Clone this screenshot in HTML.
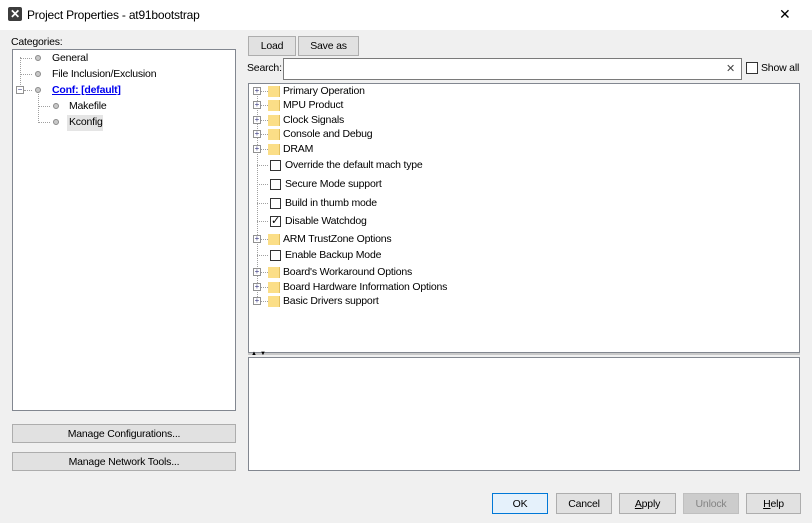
<html><head><style>
body{margin:0;width:812px;height:523px;background:#f0f0f0;font-family:"Liberation Sans",sans-serif;font-size:10px;letter-spacing:-0.2px;color:#000;position:relative;overflow:hidden}
.a{position:absolute}
.btn{position:absolute;background:#e1e1e1;border:1px solid #adadad;box-sizing:border-box;display:flex;align-items:center;justify-content:center;font-size:10.5px}
.panel{position:absolute;background:#fff;border:1px solid #828790;box-sizing:border-box}
.t{position:absolute;white-space:nowrap;font-size:10.5px}
.pl{position:absolute;width:8px;height:8px;border:1px solid #919191;box-sizing:border-box;background:#fff;font-size:8px;line-height:6px;text-align:center;color:#3a3a80;letter-spacing:0}
.fold{position:absolute;width:11px;height:11px;background:#fbde87;border-right:1px solid #e2c060}
.cb{position:absolute;width:11px;height:11px;border:1px solid #333;background:#fff;box-sizing:border-box}
.dot{position:absolute;width:6px;height:6px;border-radius:50%;background:#c8c8c8;border:1px solid #8a8a8a;box-sizing:border-box}
.hl{position:absolute;border-top:1px dotted #a0a0a0;height:0}
.vl{position:absolute;border-left:1px dotted #a0a0a0;width:0}
</style></head><body>
<div class="a" style="left:0;top:0;width:812px;height:30px;background:#fff"></div>
<div class="a" style="left:8px;top:7px;width:14px;height:14px;background:#3c3c3c;border-radius:2px;color:#fff;font-size:12px;line-height:14px;text-align:center;font-weight:bold">✕</div>
<div class="t" style="left:27px;top:8px;font-size:12px">Project Properties - at91bootstrap</div>
<div class="a" style="left:779px;top:6px;font-size:14px">✕</div>

<div class="t" style="left:11px;top:36px">Categories:</div>
<div class="panel" style="left:12px;top:49px;width:224px;height:362px"></div>
<div class="vl" style="left:20px;top:57px;height:30px"></div>
<div class="hl" style="left:20px;top:58px;width:12px"></div>
<div class="hl" style="left:20px;top:74px;width:12px"></div>
<div class="hl" style="left:24px;top:90px;width:8px"></div>
<div class="pl" style="left:16px;top:86px">−</div>
<div class="dot" style="left:35px;top:55px"></div><div class="t" style="left:52px;top:52px">General</div>
<div class="dot" style="left:35px;top:71px"></div><div class="t" style="left:52px;top:68px">File Inclusion/Exclusion</div>
<div class="dot" style="left:35px;top:87px"></div><div class="t" style="left:52px;top:84px;color:#0000ee;font-weight:bold;text-decoration:underline">Conf: [default]</div>
<div class="vl" style="left:38px;top:94px;height:29px"></div>
<div class="hl" style="left:38px;top:106px;width:12px"></div>
<div class="hl" style="left:38px;top:122px;width:12px"></div>
<div class="dot" style="left:53px;top:103px"></div><div class="t" style="left:69px;top:100px">Makefile</div>
<div class="dot" style="left:53px;top:119px"></div>
<div class="a" style="left:67px;top:115px;width:36px;height:16px;background:#e5e5e5"></div>
<div class="t" style="left:69px;top:116px">Kconfig</div>

<div class="btn" style="left:12px;top:424px;width:224px;height:19px">Manage Configurations...</div>
<div class="btn" style="left:12px;top:452px;width:224px;height:19px">Manage Network Tools...</div>

<div class="btn" style="left:248px;top:36px;width:48px;height:20px">Load</div>
<div class="btn" style="left:298px;top:36px;width:61px;height:20px">Save as</div>
<div class="t" style="left:247px;top:62px">Search:</div>
<div class="a" style="left:283px;top:58px;width:459px;height:22px;background:#fff;border:1px solid #7a7a7a;box-sizing:border-box"></div>
<div class="a" style="left:726px;top:62px;font-size:11px;color:#444">✕</div>
<div class="cb" style="left:746px;top:62px;width:12px;height:12px"></div>
<div class="t" style="left:761px;top:62px">Show all</div>

<div class="panel" style="left:248px;top:83px;width:552px;height:270px"></div>
<div class="vl" style="left:257px;top:90px;height:215px"></div>
<div id="rows"></div>
<div class="a" style="left:248px;top:353px;width:552px;height:2px;background:#c8c8c8"></div>
<div class="a" style="left:251px;top:351px;font-size:6px">▲</div><div class="a" style="left:260px;top:351px;font-size:6px">▼</div>
<div class="panel" style="left:248px;top:357px;width:552px;height:114px"></div>

<div class="btn" style="left:492px;top:493px;width:56px;height:21px;border:1px solid #0078d7;background:#e5f1fb">OK</div>
<div class="btn" style="left:556px;top:493px;width:56px;height:21px">Cancel</div>
<div class="btn" style="left:619px;top:493px;width:57px;height:21px"><u>A</u>pply</div>
<div class="btn" style="left:683px;top:493px;width:56px;height:21px;color:#838383;background:#ccc;border-color:#bfbfbf">Unlock</div>
<div class="btn" style="left:746px;top:493px;width:55px;height:21px"><u>H</u>elp</div>

<script>
var rows=[[91,'f','Primary Operation'],[105,'f','MPU Product'],[120,'f','Clock Signals'],[134,'f','Console and Debug'],[149,'f','DRAM'],[165,'c','Override the default mach type'],[184,'c','Secure Mode support'],[203,'c','Build in thumb mode'],[221,'k','Disable Watchdog'],[239,'f','ARM TrustZone Options'],[255,'c','Enable Backup Mode'],[272,'f',"Board's Workaround Options"],[287,'f','Board Hardware Information Options'],[301,'f','Basic Drivers support']];
var h='';rows.forEach(function(r){var y=r[0];
h+='<div class="hl" style="left:257px;top:'+y+'px;width:11px"></div>';
if(r[1]=='f'){h+='<div class="pl" style="left:253px;top:'+(y-4)+'px">+</div><div class="fold" style="left:268px;top:'+(y-5)+'px"></div>';}
else{h+='<div class="cb" style="left:270px;top:'+(y-5)+'px">'+(r[1]=='k'?'<span style="position:absolute;left:0;top:-3px;font-size:11px">✓</span>':'')+'</div>';}
h+='<div class="t" style="left:'+(r[1]=='f'?283:285)+'px;top:'+(y-6)+'px">'+r[2]+'</div>';});
document.getElementById('rows').innerHTML=h;
</script>
</body></html>
